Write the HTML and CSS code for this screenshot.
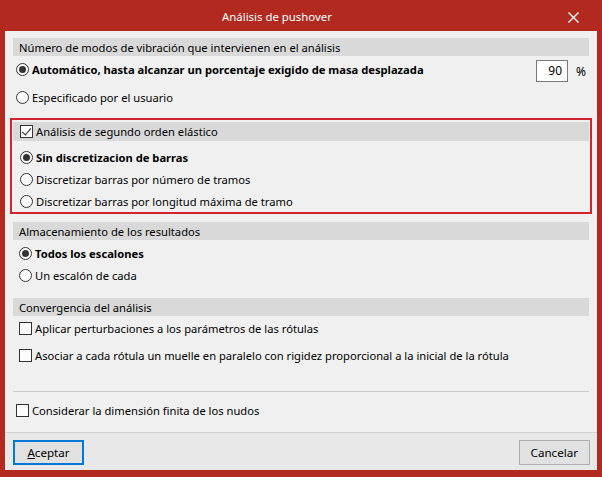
FILE: index.html
```html
<!DOCTYPE html>
<html lang="es">
<head>
    <meta charset="UTF-8">
    <meta name="viewport" content="width=device-width, initial-scale=1.0">
    <title>Análisis de pushover</title>
    <link rel="stylesheet" href="styles.css">
</head>
<body>
    <div class="window">
        <div class="titlebar">
            <span class="title">Análisis de pushover</span>
            <span class="close">
                <svg width="11" height="11" viewBox="0 0 11 11">
                    <path d="M0.5 0.5 L10.5 10.5 M10.5 0.5 L0.5 10.5" stroke="#fff" stroke-width="1.4"/>
                </svg>
            </span>
        </div>

        <div class="content">
            <div class="main">
                <div class="section modes">
                    <div class="header">Número de modos de vibración que intervienen en el análisis</div>
                    <div class="row first">
                        <label class="option bold"><span class="radio checked"></span>Automático, hasta alcanzar un porcentaje exigido de masa desplazada</label>
                        <div class="percent">
                            <span class="number">90</span>
                            <span class="unit">%</span>
                        </div>
                    </div>
                    <div class="row">
                        <label class="option"><span class="radio"></span>Especificado por el usuario</label>
                    </div>
                </div>

                <div class="section highlight">
                    <div class="header check-header"><span class="check checked"></span>Análisis de segundo orden elástico</div>
                    <div class="options">
                        <label class="option bold"><span class="radio checked"></span>Sin discretizacion de barras</label>
                        <label class="option"><span class="radio"></span>Discretizar barras por número de tramos</label>
                        <label class="option"><span class="radio"></span>Discretizar barras por longitud máxima de tramo</label>
                    </div>
                </div>

                <div class="section storage">
                    <div class="header">Almacenamiento de los resultados</div>
                    <div class="options">
                        <label class="option bold"><span class="radio checked"></span>Todos los escalones</label>
                        <label class="option"><span class="radio"></span>Un escalón de cada</label>
                    </div>
                </div>

                <div class="section convergence">
                    <div class="header">Convergencia del análisis</div>
                    <div class="options wide">
                        <label class="option"><span class="check"></span>Aplicar perturbaciones a los parámetros de las rótulas</label>
                        <label class="option"><span class="check"></span>Asociar a cada rótula un muelle en paralelo con rigidez proporcional a la inicial de la rótula</label>
                    </div>
                </div>

                <div class="separator"></div>

                <div class="section nodes">
                    <label class="option"><span class="check"></span>Considerar la dimensión finita de los nudos</label>
                </div>
            </div>

            <div class="footer">
                <button class="btn default"><u>A</u>ceptar</button>
                <button class="btn">Cancelar</button>
            </div>
        </div>
    </div>
</body>
</html>
```

FILE: styles.css
```css
* {
    margin: 0;
    padding: 0;
    box-sizing: border-box;
}
body {
    background-color: #b22a1f;
    font-family: "Noto Sans", "Open Sans", sans-serif;
    font-size: 11.2px;
    color: #000;
}
.window {
    width: 602px;
    height: 477px;
    display: flex;
    flex-direction: column;
}
.titlebar {
    height: 31px;
    position: relative;
    display: flex;
    align-items: center;
    justify-content: center;
    color: #fff;
    font-size: 11.4px;
    padding: 2px 48px 0 0;
}
.close {
    position: absolute;
    right: 23px;
    top: 12px;
    width: 11px;
    height: 11px;
    display: flex;
}
.content {
    margin: 0 5px 7px 5px;
    height: 439px;
    background-color: #f0f0f0;
    display: flex;
    flex-direction: column;
}
.main {
    flex: 1;
    padding: 7px 8px 0 8px;
}
.header {
    height: 18px;
    background-color: #d9d9d9;
    padding-left: 6px;
    display: flex;
    align-items: center;
}
.option {
    display: flex;
    align-items: center;
    height: 22px;
    white-space: nowrap;
}
.bold {
    font-weight: 700;
}
.radio {
    width: 13px;
    height: 13px;
    border: 1px solid #333;
    border-radius: 50%;
    background-color: #fff;
    margin-right: 3px;
    flex-shrink: 0;
    display: flex;
    align-items: center;
    justify-content: center;
}
.radio.checked::after {
    content: "";
    width: 7px;
    height: 7px;
    border-radius: 50%;
    background-color: #333;
}
.check {
    width: 13px;
    height: 13px;
    border: 1px solid #333;
    background-color: #fff;
    margin-right: 3px;
    flex-shrink: 0;
    position: relative;
}
.check.checked::after {
    content: "";
    position: absolute;
    left: 3px;
    top: 0px;
    width: 4px;
    height: 8px;
    border-right: 1px solid #222;
    border-bottom: 1px solid #222;
    transform: rotate(40deg);
}

/* modos de vibracion */
.modes .row {
    display: flex;
    align-items: flex-start;
    padding-left: 3px;
}
.modes .first {
    margin-top: 2px;
    height: 28px;
}
.percent {
    margin-left: auto;
    margin-top: 2px;
    display: flex;
    align-items: center;
}
.number {
    width: 32px;
    height: 22px;
    border: 1px solid #7a7a7a;
    background-color: #fff;
    text-align: right;
    padding-right: 5px;
    line-height: 20px;
    font-size: 12px;
}
.unit {
    margin-left: 8px;
    margin-right: 3px;
    font-size: 12px;
}

/* recuadro rojo */
.highlight {
    margin: 10px -3px 0 -3px;
    border: 2px solid #d3232f;
    padding: 2px 1px 0 1px;
}
.check-header {
    height: 19px;
    padding-left: 7px;
}
.highlight .options {
    margin-top: 5px;
    padding-left: 7px;
}

.storage {
    margin-top: 8px;
}
.storage .options {
    padding-left: 6px;
    margin-top: 2px;
}
.convergence {
    margin-top: 12px;
}
.convergence .options {
    padding-left: 6px;
    margin-top: 1px;
    display: flex;
    flex-direction: column;
    gap: 5px;
}
.separator {
    height: 1px;
    background-color: #c9c9c9;
    margin-top: 25px;
}
.nodes {
    margin-top: 7px;
    padding-left: 3px;
}

.footer {
    height: 38px;
    border-top: 1px solid #cfcfcf;
    background-color: #e8e8e8;
    display: flex;
    justify-content: space-between;
    align-items: flex-start;
    padding: 7px 7px 0 8px;
}
.btn {
    height: 25px;
    font-family: "Noto Sans", "Open Sans", sans-serif;
    font-size: 11.6px;
    background-color: #e1e1e1;
    border: 1px solid #adadad;
    color: #000;
    padding: 0 11px;
}
.btn.default {
    width: 71px;
    border: 2px solid #0078d7;
}
.btn u {
    text-decoration-thickness: 1px;
}
```
